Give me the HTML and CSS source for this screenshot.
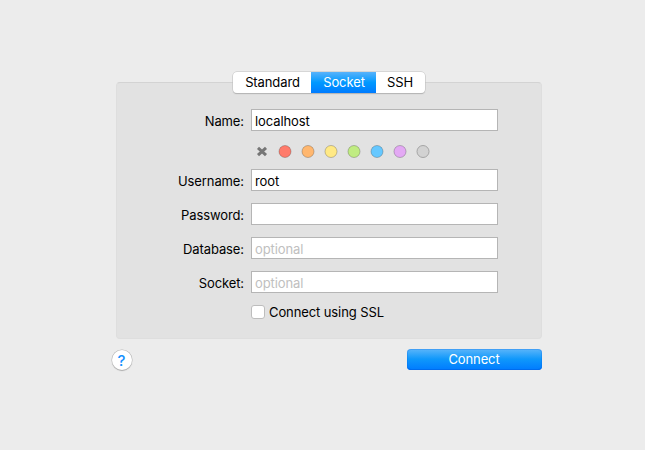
FILE: index.html
```
<!DOCTYPE html>
<html lang="en">
<head>
<meta charset="utf-8">
<title>Connection</title>
<link rel="stylesheet" href="styles.css">
</head>
<body>
<main class="connection">
  <nav class="tabs">
    <button class="tab tab-standard">Standard</button>
    <button class="tab tab-socket">Socket</button>
    <button class="tab tab-ssh">SSH</button>
  </nav>
  <form class="panel">
    <label class="label" for="name">Name:</label>
    <input class="field" id="name" value="localhost">
    <svg class="colors" width="180" height="16" viewBox="0 0 180 16">
      <path class="clear" d="M7 4.8l8 7.4M15 4.8l-8 7.4"/>
      <circle class="dot red" cx="34" cy="8.5" r="6"/>
      <circle class="dot orange" cx="57" cy="8.5" r="6"/>
      <circle class="dot yellow" cx="80" cy="8.5" r="6"/>
      <circle class="dot green" cx="103" cy="8.5" r="6"/>
      <circle class="dot blue" cx="126" cy="8.5" r="6"/>
      <circle class="dot purple" cx="149" cy="8.5" r="6"/>
      <circle class="dot gray" cx="172" cy="8.5" r="6"/>
    </svg>
    <label class="label" for="user">Username:</label>
    <input class="field" id="user" value="root">
    <label class="label" for="pass">Password:</label>
    <input class="field" id="pass" type="password">
    <label class="label" for="db">Database:</label>
    <input class="field" id="db" placeholder="optional">
    <label class="label" for="socket">Socket:</label>
    <input class="field" id="socket" placeholder="optional">
    <label class="ssl"><input class="check" type="checkbox"><span>Connect using SSL</span></label>
  </form>
  <footer class="actions">
    <button class="help">?</button>
    <button class="connect">Connect</button>
  </footer>
</main>
</body>
</html>
```
FILE: styles.css
```
* { box-sizing: border-box; }
body {
  margin: 0;
  height: 450px;
  overflow: hidden;
  background: #ececec;
  color: #000;
  font: 13px/20px Inter, "Liberation Sans", sans-serif;
}
button, input { font: inherit; letter-spacing: inherit; margin: 0; padding: 0; border: 0; color: inherit; }
.connection { width: 431px; margin-left: 111px; padding-top: 72px; letter-spacing: -0.1px; }
.tabs {
  position: relative;
  display: flex;
  width: 192px;
  height: 21px;
  margin: 0 0 -11px 122px;
  border-radius: 4px;
  background: #fff;
  box-shadow: 0 0 0 .5px #c0c0c0, 0 1px 1px #aaa;
}
.tab { background: none; height: 21px; line-height: 21px; text-align: center; white-space: nowrap; }
.tab-standard { width: 78px; padding-left: 1px; }
.tab-socket { width: 65px; padding-left: 1px; color: #fff; background: linear-gradient(#58b3fb, #0099ff 50%, #007bff); }
.tab-ssh { width: 49px; padding-right: 1px; }
.panel {
  display: grid;
  grid-template-columns: 127px 247px;
  grid-template-rows: 22px 14px 22px 22px 22px 22px 14px;
  column-gap: 7px;
  row-gap: 12px;
  align-content: start;
  height: 257px;
  margin-left: 5px;
  padding-top: 26px;
  border: 1px solid #dedede;
  border-top-color: #d3d3d3;
  border-radius: 4px;
  background: #e2e2e2;
}
.label { text-align: right; line-height: 25px; }
.field {
  width: 247px;
  height: 22px;
  padding: 2px 3px 0;
  border: 1px solid #b5b5b5;
  border-radius: 0;
  background: #fff;
  outline: 0;
}
.field::placeholder { color: #c0c0c0; opacity: 1; }
.colors { grid-column: 2; display: block; }
.clear { fill: none; stroke: #767676; stroke-width: 3; }
.dot { stroke: rgba(0, 0, 0, .22); stroke-width: 1; }
.red { fill: #ff7b6b; }
.orange { fill: #ffb76f; }
.yellow { fill: #ffe985; }
.green { fill: #c0ec82; }
.blue { fill: #66c8ff; }
.purple { fill: #e3a9f4; }
.gray { fill: #d2d2d2; stroke: #a5a5a5; }
.ssl { grid-column: 2; display: flex; align-items: center; gap: 4px; height: 14px; line-height: 16px; }
.check { appearance: none; width: 14px; height: 14px; border: 1px solid #bdbdbd; border-radius: 3px; background: #fff; }
.actions { display: flex; align-items: flex-start; justify-content: space-between; margin-top: 10px; }
.help {
  width: 20px;
  height: 20px;
  margin: 1px 0 0 .5px;
  border-radius: 50%;
  background: #fff;
  box-shadow: 0 0 0 .5px #b5b5b5, 0 1px 1px #aaa;
  color: #1490ff;
  font-size: 15px;
  font-weight: 500;
  line-height: 21px;
}
.connect {
  width: 135px;
  height: 21px;
  padding-right: 1px;
  border-radius: 4px;
  background: linear-gradient(#5bb5fa, #0f98fb 48%, #007bff);
  box-shadow: inset 0 0 0 1px rgba(0, 100, 230, .25), inset 0 -1px #006ff0;
  color: #fff;
  line-height: 21px;
}
```
